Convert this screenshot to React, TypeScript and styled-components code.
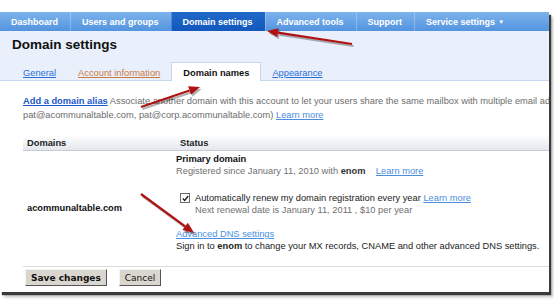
import styled, { createGlobalStyle } from "styled-components";

const GlobalStyle = createGlobalStyle`
  html, body {
    margin: 0;
    padding: 0;
    background: #ffffff;
  }
  body {
    font-family: "Liberation Sans", Arial, sans-serif;
    font-size: 9.3px;
    color: #000;
  }
`;

const Page = styled.div`
  position: relative;
  width: 554px;
  height: 303px;
  padding-top: 12px;
  box-sizing: border-box;
  overflow: hidden;
`;

const Frame = styled.div`
  width: 549px;
  height: 280px;
  background: #ffffff;
  overflow: hidden;
  box-shadow: 2px 3px 1px #3a3a3a, 4px 5px 3px rgba(0, 0, 0, 0.25);
`;

// TOP NAV
const Nav = styled.div`
  display: flex;
  height: 19px;
  background: linear-gradient(#7db3ec, #5394df);
`;

const NavItem = styled.div<{ $active?: boolean; $first?: boolean }>`
  display: flex;
  align-items: center;
  padding: 0 12px 0 11px;
  border-left: ${(p) => (p.$first ? "none" : "1px solid rgba(255,255,255,0.25)")};
  background: ${(p) => (p.$active ? "linear-gradient(#2068c8, #1258bd)" : "transparent")};
  color: #ffffff;
  font-family: "Liberation Sans", Tahoma, sans-serif;
  font-weight: bold;
  font-size: 9px;
  white-space: nowrap;
`;

const Caret = styled.span`
  font-size: 6px;
  margin-left: 3px;
`;

// HEADER AREA
const Header = styled.div`
  background: #e9f0fb;
  border-bottom: 1px solid #c6d8f0;
  height: 49px;
  display: flex;
  flex-direction: column;
  justify-content: space-between;
`;

const Title = styled.h1`
  margin: 0;
  padding: 6px 0 0 12px;
  font-size: 13.5px;
  font-weight: bold;
  color: #111;
`;

const Tabs = styled.div`
  display: flex;
  align-items: flex-end;
  padding-left: 12px;
`;

const Tab = styled.div<{ $active?: boolean }>`
  padding: 0 11px 2px;
  height: ${(p) => (p.$active ? "19px" : "auto")};
  box-sizing: border-box;
  display: flex;
  align-items: center;
  background: ${(p) => (p.$active ? "#ffffff" : "transparent")};
  border: ${(p) => (p.$active ? "1px solid #c6d8f0" : "none")};
  border-bottom: none;
  margin-bottom: ${(p) => (p.$active ? "-1px" : "0")};
  white-space: nowrap;
`;

const TabLink = styled.a<{ $color?: string }>`
  color: ${(p) => p.$color || "#2a6fd6"};
  text-decoration: underline;
`;

const TabCurrent = styled.span`
  font-weight: bold;
  color: #111;
  padding-top: 4px;
`;

// CONTENT
const Content = styled.div`
  padding: 13px 0 0 23px;
`;

const Intro = styled.div`
  color: #6d6d6d;
  line-height: 14px;
  white-space: nowrap;
`;

const StrongLink = styled.a`
  color: #1b57c8;
  font-weight: bold;
  text-decoration: underline;
`;

const Link = styled.a`
  color: #4b8ee0;
  text-decoration: underline;
`;

const Table = styled.div`
  margin-top: 13px;
  display: grid;
  grid-template-columns: 153px 1fr;
`;

const HeadCell = styled.div`
  height: 15px;
  padding-left: 4px;
  display: flex;
  align-items: center;
  font-weight: bold;
  color: #222;
  background: linear-gradient(#ffffff, #e3e7ee);
  border-bottom: 1px solid #c5cad3;
`;

const DomainCell = styled.div`
  padding: 51px 0 0 4px;
  line-height: 12px;
  font-weight: bold;
  color: #111;
`;

const StatusCell = styled.div`
  padding-top: 2px;
  line-height: 12px;
`;

const Block = styled.div<{ $gap?: number }>`
  margin-top: ${(p) => p.$gap ?? 0}px;
`;

const Bold = styled.div`
  font-weight: bold;
  color: #111;
  line-height: 12px;
`;

const Gray = styled.div<{ $indent?: number }>`
  color: #707070;
  padding-left: ${(p) => p.$indent ?? 0}px;
`;

const Dark = styled.b`
  color: #333;
`;

const CheckRow = styled.div`
  display: flex;
  align-items: center;
  padding-left: 4px;
  color: #222;
`;

const Box = styled.span`
  width: 8px;
  height: 8px;
  border: 1px solid #6b6b6b;
  background: #fff;
  margin-right: 5px;
  display: inline-flex;
  align-items: center;
  justify-content: center;
`;

const Plain = styled.div`
  color: #222;
  white-space: nowrap;
`;

const Separator = styled.div`
  margin-top: 14px;
  border-top: 1px solid #dcdcdc;
`;

const Buttons = styled.div`
  display: flex;
  gap: 12px;
  padding: 2px 0 0 2px;
`;

const Button = styled.button<{ $bold?: boolean }>`
  height: 17px;
  padding: 0 5px;
  font-family: "DejaVu Sans", Verdana, sans-serif;
  font-size: 9px;
  font-weight: ${(p) => (p.$bold ? "bold" : "normal")};
  color: #111;
  background: #d9d6cf;
  border: 1px solid;
  border-color: #f4f3ef #555 #555 #f4f3ef;
`;

// ARROWS OVER EVERYTHING
const Overlay = styled.svg`
  position: absolute;
  left: 0;
  top: 0;
  pointer-events: none;
`;

function Arrow({ x1, y1, x2, y2 }: { x1: number; y1: number; x2: number; y2: number }) {
  const a = Math.atan2(y2 - y1, x2 - x1);
  const len = 11;
  const w = 4.5;
  const bx = x2 - len * Math.cos(a);
  const by = y2 - len * Math.sin(a);
  const px = -Math.sin(a) * w;
  const py = Math.cos(a) * w;
  const head = `${x2},${y2} ${bx + px},${by + py} ${bx - px},${by - py}`;
  return (
    <g>
      <g transform="translate(1.5,2)" opacity="0.3">
        <line x1={x1} y1={y1} x2={bx} y2={by} stroke="#000" strokeWidth="2.2" />
        <polygon points={head} fill="#000" />
      </g>
      <line x1={x1} y1={y1} x2={bx} y2={by} stroke="#b01212" strokeWidth="2.2" />
      <polygon points={head} fill="#b01212" />
    </g>
  );
}

export default function App() {
  return (
    <>
      <GlobalStyle />
      <Page>
        <Frame>
          <Nav>
            <NavItem $first>Dashboard</NavItem>
            <NavItem>Users and groups</NavItem>
            <NavItem $active>Domain settings</NavItem>
            <NavItem>Advanced tools</NavItem>
            <NavItem>Support</NavItem>
            <NavItem>
              Service settings<Caret>▼</Caret>
            </NavItem>
          </Nav>

          <Header>
            <Title>Domain settings</Title>
            <Tabs>
              <Tab>
                <TabLink>General</TabLink>
              </Tab>
              <Tab>
                <TabLink $color="#c87a45">Account information</TabLink>
              </Tab>
              <Tab $active>
                <TabCurrent>Domain names</TabCurrent>
              </Tab>
              <Tab>
                <TabLink>Appearance</TabLink>
              </Tab>
            </Tabs>
          </Header>

          <Content>
            <Intro>
              <StrongLink>Add a domain alias</StrongLink> Associate another domain with this account to let
              your users share the same mailbox with multiple email addresses
              <br />
              pat@acommunaltable.com, pat@corp.acommunaltable.com) <Link>Learn more</Link>
            </Intro>

            <Table>
              <HeadCell>Domains</HeadCell>
              <HeadCell>Status</HeadCell>
              <DomainCell>acommunaltable.com</DomainCell>
              <StatusCell>
                <Bold>Primary domain</Bold>
                <Gray>
                  Registered since January 11, 2010 with <Dark>enom</Dark>&nbsp;&nbsp;&nbsp; <Link>Learn more</Link>
                </Gray>
                <Block $gap={15}>
                  <CheckRow>
                    <Box>
                      <svg width="7" height="7" viewBox="0 0 7 7">
                        <path d="M0.8 3.4 L2.7 5.4 L6.2 1" fill="none" stroke="#222" strokeWidth="1.4" />
                      </svg>
                    </Box>
                    Automatically renew my domain registration every year&nbsp;<Link>Learn more</Link>
                  </CheckRow>
                  <Gray $indent={19}>Next renewal date is January 11, 2011 , $10 per year</Gray>
                </Block>
                <Block $gap={12}>
                  <Link>Advanced DNS settings</Link>
                  <Plain>
                    Sign in to <b>enom</b> to change your MX records, CNAME and other advanced DNS settings.
                  </Plain>
                </Block>
              </StatusCell>
            </Table>

            <Separator />
            <Buttons>
              <Button $bold>Save changes</Button>
              <Button>Cancel</Button>
            </Buttons>
          </Content>
        </Frame>

        <Overlay width="554" height="303">
          <Arrow x1={352} y1={44} x2={267} y2={31} />
          <Arrow x1={141} y1={107} x2={200} y2={87} />
          <Arrow x1={141} y1={194} x2={194} y2={233} />
        </Overlay>
      </Page>
    </>
  );
}
